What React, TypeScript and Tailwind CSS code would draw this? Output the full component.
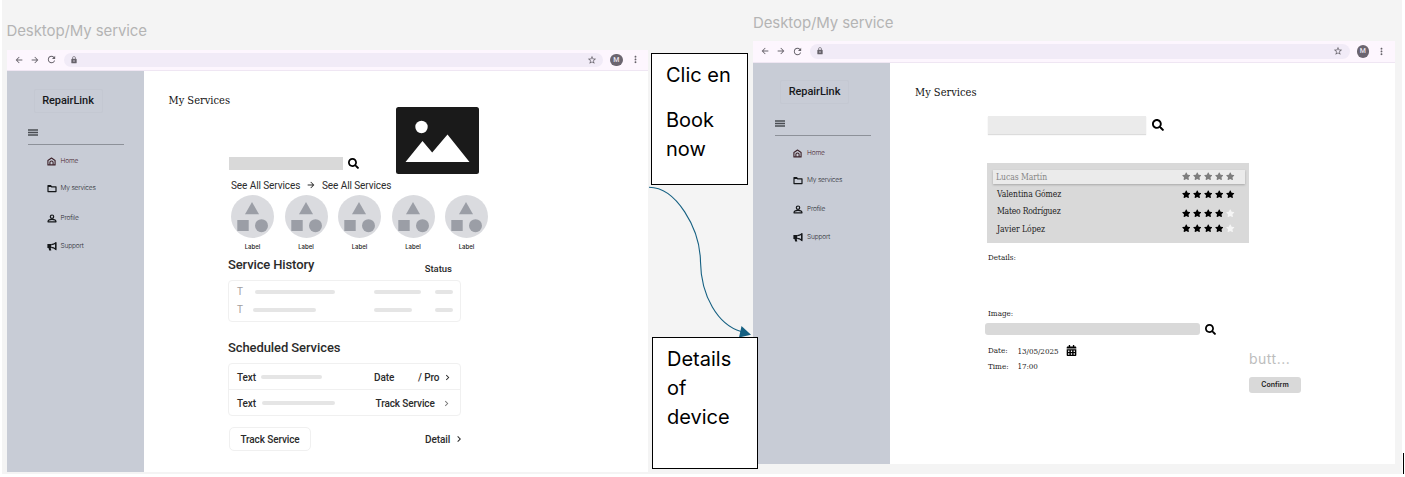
import React from "react";
import {
  MdArrowBack,
  MdArrowForward,
  MdRefresh,
  MdLock,
  MdStarBorder,
  MdMoreVert,
  MdChevronRight,
} from "react-icons/md";
import { FaSearch, FaStar, FaCalendarAlt } from "react-icons/fa";

const slab = "font-['Roboto_Slab','DejaVu_Serif_Condensed','DejaVu_Serif',serif]";

function BrowserBar() {
  return (
    <div className="flex h-[21.5px] items-center border-b border-[#efe6f3] bg-[#fdf6fe] text-[#66626a]">
      <MdArrowBack className="ml-[7px] size-[10px]" />
      <MdArrowForward className="ml-[6px] size-[10px]" />
      <MdRefresh className="ml-[6px] size-[11px]" />
      <div className="ml-[7px] flex h-[14.5px] w-[539.5px] items-center rounded-full bg-[#f1ebf7]">
        <MdLock className="ml-[6px] size-[8px]" />
        <MdStarBorder className="mr-[6.5px] ml-auto size-[10px]" />
      </div>
      <div className="ml-[7px] flex size-[12.5px] items-center justify-center rounded-full bg-[#6b6570] font-['Roboto',sans-serif] text-[7px] font-medium text-[#e8e2ec]">
        M
      </div>
      <MdMoreVert className="ml-[7px] size-[11px]" />
    </div>
  );
}

function HomeIcon() {
  return (
    <svg viewBox="0 0 9 9" className="h-[9px] w-[9px]" fill="none" stroke="#3b1f27" strokeWidth="1.1">
      <path d="M.9 7.9V3.5L4.5 1l3.6 2.5v4.4z" strokeLinejoin="round" />
      <path d="M2.9 7.8V5.6a1.6 1.6 0 0 1 3.2 0v2.2" />
    </svg>
  );
}

function FolderIcon() {
  return (
    <svg viewBox="0 0 10 9" className="h-[9px] w-[10px]" fill="none" stroke="currentColor" strokeWidth="1.2">
      <path d="M1 7.6V1.6h2.6l1 1.2H9v4.8z" strokeLinejoin="round" />
      <path d="M1 2.4h3.4" />
    </svg>
  );
}

function PersonIcon() {
  return (
    <svg viewBox="0 0 10 9" className="h-[9px] w-[10px]" fill="none" stroke="currentColor" strokeWidth="1.2">
      <circle cx="5" cy="2.7" r="1.7" />
      <path d="M1 7.8c0-1.6 2-2.4 4-2.4s4 .8 4 2.4z" strokeLinejoin="round" />
    </svg>
  );
}

function MegaphoneIcon() {
  return (
    <svg viewBox="0 0 10 9" className="h-[9px] w-[10px]" fill="none" stroke="currentColor" strokeWidth="1.2">
      <path d="M.4 2.1h3.8v3.8H3.7l.6 2.6H2.2l-.7-2.6H.4z" fill="currentColor" stroke="none" />
      <path d="M4.2 2.6C6 2.5 7.4 1.9 8.7.9v6.3C7.4 6.1 6 5.5 4.2 5.4" />
      <path d="M8.8.5v7.2" />
    </svg>
  );
}

function NavItem({ icon, label, className }: { icon: React.ReactNode; label: string; className: string }) {
  return (
    <li className={`ml-[40px] flex h-[12px] items-center ${className}`}>
      <span className="flex w-[14px] items-center text-[#15171a]">{icon}</span>
      <span className="pt-[1px] font-['Inter',sans-serif] text-[6.6px] font-light tracking-[-0.2px] whitespace-nowrap">
        {label}
      </span>
    </li>
  );
}

function Sidebar() {
  return (
    <aside className="flex h-full w-[137px] shrink-0 flex-col bg-[#c8ccd6] text-[#2b2d33]">
      <div className="mt-[17.5px] ml-[27px] flex h-[24px] w-[69px] items-center justify-center rounded-xs border border-[#c4c8d2] pt-[1px] font-['Roboto',sans-serif] text-[11px] font-medium tracking-[-0.05px] text-[#17181b]">
        RepairLink
      </div>
      <svg viewBox="0 0 10 7" className="mt-[16px] ml-[21.5px] h-[7px] w-[10px]">
        <path d="M0 1h10M0 3.5h10M0 6h10" stroke="#4a4d53" strokeWidth="1.4" />
      </svg>
      <div className="mt-[8px] ml-[21.5px] h-px w-[96px] bg-[#8d9199]" />
      <ul>
        <NavItem icon={<HomeIcon />} label="Home" className="mt-[11px] text-[#4a2630]" />
        <NavItem icon={<FolderIcon />} label="My services" className="mt-[15px]" />
        <NavItem icon={<PersonIcon />} label="Profile" className="mt-[17.5px]" />
        <NavItem icon={<MegaphoneIcon />} label="Support" className="mt-[16px]" />
      </ul>
    </aside>
  );
}

function Frame({ children, className }: { children: React.ReactNode; className: string }) {
  return (
    <section className={`flex flex-col ${className}`}>
      <h2 className="h-[20px] font-['Inter',sans-serif] text-[15px] leading-[20px] tracking-[-0.1px] whitespace-nowrap text-[#b4b4b4]">
        Desktop/My service
      </h2>
      <div className="mt-[8.5px] flex h-[422.5px] flex-col bg-white">
        <BrowserBar />
        <div className="flex min-h-0 flex-1">
          <Sidebar />
          {children}
        </div>
      </div>
    </section>
  );
}

function PageHeading() {
  return (
    <h1 className={`h-[15px] text-[11px] leading-[15px] whitespace-nowrap text-[#111] ${slab}`}>My Services</h1>
  );
}

function Category() {
  return (
    <div className="flex w-[43px] flex-col items-center">
      <svg viewBox="0 0 43 43" className="size-[43px]">
        <circle cx="21.5" cy="21.5" r="21.5" fill="#dadbdf" />
        <g fill="#9b9ea6">
          <path d="M21 7l7 12.2H14z" />
          <rect x="6.3" y="25" width="11.4" height="11" />
          <circle cx="30.5" cy="30.7" r="6.5" />
        </g>
      </svg>
      <span className="mt-[4.5px] h-[8px] font-['Inter',sans-serif] text-[6px] leading-[8px] font-medium text-[#222]">
        Label
      </span>
    </div>
  );
}

function Bar({ className }: { className: string }) {
  return <span className={`h-[4px] rounded-full bg-[#e5e5e5] ${className}`} />;
}

function ServicesScreen() {
  return (
    <main className="flex flex-1 flex-col font-['Roboto',sans-serif] text-[#2b2b2b]">
      <div className="flex h-[103px] pl-[25px]">
        <div className="w-[227.5px] pt-[22px]">
          <PageHeading />
          <div className="mt-[49px] ml-[60.5px] flex items-center">
            <div className="h-[13px] w-[114px] bg-[#d9d9d9]" />
            <FaSearch className="ml-[5px] size-[11px] text-black" />
          </div>
        </div>
        <svg viewBox="0 0 83 67" className="mt-[36px] h-[67px] w-[83px]">
          <rect width="83" height="67" rx="2.5" fill="#1a1a1a" />
          <circle cx="25.5" cy="20" r="6.2" fill="#fff" />
          <path d="M9.5 55L26.5 34l9.7 11.5L51.5 27.5 73.5 55z" fill="#fff" />
        </svg>
      </div>
      <div className="ml-[84.5px] flex w-[233px] flex-col">
        <div className="mt-[4px] ml-[3px] flex h-[14px] items-center text-[10px] tracking-[-0.08px] whitespace-nowrap">
          <span className="w-[75px]">See All Services</span>
          <MdArrowForward className="size-[10px]" />
          <span className="ml-[6px]">See All Services</span>
        </div>
        <div className="mt-[3px] ml-[3px] flex gap-[10.5px]">
          <Category />
          <Category />
          <Category />
          <Category />
          <Category />
        </div>
        <div className="mt-[6.5px] flex h-[16px] justify-between pr-[9px] whitespace-nowrap">
          <h3 className="text-[13px] leading-[16px] font-medium tracking-[-0.13px]">Service History</h3>
          <span className="mt-[5px] text-[9.5px] leading-[14px] font-medium">Status</span>
        </div>
        <div className="mt-[7px] flex h-[42px] flex-col justify-center gap-[4px] rounded-[4px] border border-[#f0f0f0] pl-[8px] text-[10px] leading-[14px] text-[#a0a0a0]">
          <div className="flex h-[14px] items-center">
            <span className="w-[18px]">T</span>
            <Bar className="w-[80px]" />
            <Bar className="ml-[39px] w-[47px]" />
            <Bar className="ml-[14px] w-[18px]" />
          </div>
          <div className="flex h-[14px] items-center">
            <span className="w-[16px]">T</span>
            <Bar className="w-[63px]" />
            <Bar className="ml-[58px] w-[38px]" />
            <Bar className="ml-[23px] w-[18px]" />
          </div>
        </div>
        <h3 className="mt-[18px] h-[16px] text-[13px] leading-[16px] font-medium tracking-[-0.09px] whitespace-nowrap">
          Scheduled Services
        </h3>
        <div className="mt-[7px] h-[53px] rounded-[4px] border border-[#f0f0f0] text-[10px] font-medium tracking-[-0.1px] whitespace-nowrap">
          <div className="flex h-[26px] items-center border-b border-[#f0f0f0] pt-px pl-[8px]">
            <span className="w-[24px]">Text</span>
            <Bar className="w-[61px]" />
            <span className="ml-[52px] w-[44px]">Date</span>
            <span className="w-[24px]">/ Pro</span>
            <MdChevronRight className="size-[11px]" />
          </div>
          <div className="flex h-[26px] items-center pl-[8px]">
            <span className="w-[25px]">Text</span>
            <Bar className="w-[73px]" />
            <span className="ml-[40.5px] w-[65px]">Track Service</span>
            <MdChevronRight className="size-[11px] text-[#777]" />
          </div>
        </div>
        <div className="mt-[11px] flex h-[24px] items-center text-[10px] font-medium tracking-[-0.1px] whitespace-nowrap">
          <span className="ml-px flex h-[24px] w-[82px] shrink-0 items-center justify-center rounded-[5px] border border-[#f0f0f0]">
            Track Service
          </span>
          <span className="ml-[114px] w-[27.5px] shrink-0">Detail</span>
          <MdChevronRight className="size-[12px] shrink-0" />
        </div>
      </div>
    </main>
  );
}

function Stars({ filled, muted = false, className = "" }: { filled: number; muted?: boolean; className?: string }) {
  return (
    <span className={`flex gap-[2.6px] ${className}`}>
      {[0, 1, 2, 3, 4].map((i) => (
        <FaStar
          key={i}
          className={`size-[8.5px] ${i >= filled ? "text-[#f5f5f5]" : muted ? "text-[#7d7d7d]" : "text-black"}`}
        />
      ))}
    </span>
  );
}

function DeviceScreen() {
  return (
    <main className="flex flex-1 flex-col pt-[22px] text-[#1c1c1c]">
      <div className="pl-[25px]">
        <PageHeading />
      </div>
      <div className="mt-[16px] ml-[98px] flex items-center">
        <div className="h-[18px] w-[158px] bg-[#ebebeb] shadow-[0_1px_1px_#dcdcdc]" />
        <FaSearch className="ml-[6px] size-[12px] text-black" />
      </div>
      <div
        className={`mt-[29px] ml-[96.5px] flex h-[80px] w-[262px] flex-col bg-[#d9d9d9] px-[6px] pt-[7px] text-[8.5px] leading-[14px] whitespace-nowrap ${slab}`}
      >
        <div className="flex h-[14px] w-[252px] items-center justify-between bg-[#ebebeb] pr-[10px] pl-[3.5px] text-[#858585] shadow-[0_1px_2px_#a8a8a8]">
          <span className="tracking-[-0.05px]">Lucas Martín</span>
          <Stars filled={5} muted />
        </div>
        <div className="mt-[3.5px] flex h-[14px] w-[252px] items-center justify-between pr-[10px] pl-[4.5px]">
          <span className="tracking-[-0.06px]">Valentina Gómez</span>
          <Stars filled={5} />
        </div>
        <div className="mt-[3px] flex h-[14px] w-[252px] items-center justify-between pr-[10px] pl-[4.5px]">
          <span className="tracking-[-0.22px]">Mateo Rodríguez</span>
          <Stars filled={4} className="mt-[4px]" />
        </div>
        <div className="mt-[4px] flex h-[14px] w-[252px] items-center justify-between pr-[10px] pl-[4.5px]">
          <span>Javier López</span>
          <Stars filled={4} className="-mt-[1px]" />
        </div>
      </div>
      <div className={`ml-[98px] flex flex-col text-[8px] leading-[12px] whitespace-nowrap ${slab}`}>
        <span className="mt-[9.5px]">Details:</span>
        <span className="mt-[44px]">Image:</span>
      </div>
      <div className="mt-[3px] ml-[95px] flex h-[12px] items-center">
        <div className="h-[12px] w-[215px] rounded-[3px] bg-[#d9d9d9]" />
        <FaSearch className="ml-[4.5px] size-[11px] text-black" />
      </div>
      <div className="ml-[98px] flex">
        <div className={`mt-[9px] w-[261px] text-[8px] leading-[12px] whitespace-nowrap ${slab}`}>
          <div className="flex h-[12px] items-center">
            <span className="w-[29.5px] pt-[1px]">Date:</span>
            <span className="w-[48px] pt-[3px] tracking-[-0.05px]">13/05/2025</span>
            <FaCalendarAlt className="size-[11px] text-black" />
          </div>
          <div className="mt-[4px] flex h-[12px] items-center">
            <span className="w-[29.5px] pt-[1px]">Time:</span>
            <span className="pt-[2px] tracking-[-0.1px]">17:00</span>
          </div>
        </div>
        <div className="mt-[14.5px] flex flex-col font-['Inter',sans-serif]">
          <span className="h-[18px] text-[14px] leading-[18px] tracking-[0.5px] text-[#bdbdbd]">butt...</span>
          <button className="mt-[9.5px] h-[16px] w-[52px] rounded-[3px] bg-[#d9d9d9] text-[7px] leading-[16px] font-semibold">
            Confirm
          </button>
        </div>
      </div>
    </main>
  );
}

function Callout({ children, className }: { children: React.ReactNode; className: string }) {
  return (
    <div
      className={`absolute border border-black bg-white font-['Inter',sans-serif] text-[20px] leading-[29px] text-black ${className}`}
    >
      {children}
    </div>
  );
}

export default function App() {
  return (
    <div className="relative h-[477px] w-[1405px] overflow-hidden bg-white pl-[2px]">
      <div className="flex h-[474px] w-[1400px] bg-[#f4f4f4] pl-[4.5px]">
        <Frame className="w-[641.5px] pt-[21px]">
          <ServicesScreen />
        </Frame>
        <Frame className="ml-[105px] w-[642px] pt-[12.5px]">
          <DeviceScreen />
        </Frame>
      </div>
      <svg className="absolute top-[180px] left-[645px] h-[160px] w-[112px]" viewBox="645 180 112 160">
        <path
          d="M649 187.3C676 187.3 700 228 700.5 262C701 296 718 325 741 331.5"
          fill="none"
          stroke="#156082"
          strokeWidth="1.1"
        />
        <path d="M741.5 326L751 334.7L739 337.5z" fill="#156082" />
      </svg>
      <Callout className="top-[53px] left-[651px] h-[132px] w-[97px] pt-[7px] pl-[14px]">
        <p>Clic en</p>
        <p className="mt-[16px]">Book now</p>
      </Callout>
      <Callout className="top-[337px] left-[652px] h-[132px] w-[106px] pt-[7px] pr-[20px] pl-[14px]">
        <p>Details of device</p>
      </Callout>
      <div className="absolute top-[453px] left-[1403px] h-[21px] w-px bg-black" />
    </div>
  );
}
